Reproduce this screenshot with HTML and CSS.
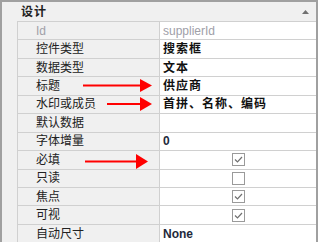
FILE: index.html
```html
<!DOCTYPE html>
<html>
<head>
  <meta charset="UTF-8">
  <title>属性</title>
  <link rel="stylesheet" href="styles.css">
</head>
<body>
  <div class="panel">
    <div class="section">
      <span class="section-title">设计</span>
      <svg class="collapse" width="7" height="4" viewBox="0 0 7 4"><polygon points="0,4 3.5,0 7,4" fill="#707070"/></svg>
    </div>
    <div class="grid">
      <div class="row"><div class="key disabled">Id</div><div class="val disabled">supplierId</div></div>
      <div class="row"><div class="key">控件类型</div><div class="val">搜索框</div></div>
      <div class="row"><div class="key">数据类型</div><div class="val">文本</div></div>
      <div class="row"><div class="key">标题</div><div class="val">供应商</div></div>
      <div class="row"><div class="key">水印或成员</div><div class="val">首拼、名称、编码</div></div>
      <div class="row"><div class="key">默认数据</div><div class="val"></div></div>
      <div class="row"><div class="key">字体增量</div><div class="val latin">0</div></div>
      <div class="row"><div class="key">必填</div><div class="val check"><span class="box on"></span></div></div>
      <div class="row"><div class="key">只读</div><div class="val check"><span class="box"></span></div></div>
      <div class="row"><div class="key">焦点</div><div class="val check"><span class="box on"></span></div></div>
      <div class="row"><div class="key">可视</div><div class="val check"><span class="box on"></span></div></div>
      <div class="row"><div class="key">自动尺寸</div><div class="val latin">None</div></div>
    </div>
    <!-- annotation arrows -->
    <svg class="notes" width="318" height="242" viewBox="0 0 318 242">
      <g fill="#f00" stroke="#f00">
        <line x1="83" y1="85.5" x2="141" y2="85.5" stroke-width="2"/>
        <polygon points="140,79 152,85.5 140,92" stroke="none"/>
        <line x1="107" y1="104" x2="141" y2="104" stroke-width="2"/>
        <polygon points="140,97 152,104 140,111" stroke="none"/>
        <line x1="85" y1="161.5" x2="137" y2="161.5" stroke-width="2"/>
        <polygon points="136,154 148,161.5 136,169" stroke="none"/>
      </g>
    </svg>
  </div>
</body>
</html>
```
FILE: styles.css
```css
body {
  margin: 0;
  font-family: "Liberation Sans", "Noto Sans CJK SC", sans-serif;
  font-size: 12px;
  line-height: 16px;
}
.panel {
  position: relative;
  width: 318px;
  height: 242px;
  box-sizing: border-box;
  border: 2px solid #a0a0a0;
  border-bottom: none;
  background: #f0f0f0;
  overflow: hidden;
}
.section {
  height: 19px;
  display: flex;
  align-items: center;
  justify-content: space-between;
  padding: 0 7px 0 19px;
}
.section-title {
  font-weight: bold;
  letter-spacing: 1px;
  color: #222;
}
.grid {
  margin-left: 15px;
  border-top: 1px solid #d0d0d0;
  border-left: 1px solid #d0d0d0;
}
.row {
  display: grid;
  grid-template-columns: 142px 1fr;
  height: 18.45px;
  box-sizing: border-box;
  border-bottom: 1px solid #d0d0d0;
}
.key {
  display: flex;
  align-items: center;
  padding-left: 18px;
  border-right: 1px solid #d0d0d0;
  color: #222;
}
.val {
  display: flex;
  align-items: center;
  padding-left: 3px;
  background: #fff;
  font-weight: bold;
  letter-spacing: 1px;
  color: #111;
}
.key.disabled, .val.disabled {
  color: #a0a0a8;
  font-weight: normal;
  letter-spacing: 0;
}
.val.latin {
  letter-spacing: 0;
  color: #1e2a3c;
}
.val.check {
  justify-content: center;
  padding-left: 0;
}
.box {
  width: 13px;
  height: 13px;
  box-sizing: border-box;
  border: 1px solid #9a9a9a;
  background: #fff;
}
.box.on {
  background: #fff url("data:image/svg+xml,%3Csvg xmlns='http://www.w3.org/2000/svg' width='11' height='11'%3E%3Cpath d='M2 5.5 L4.5 8 L9 3' fill='none' stroke='%23707070' stroke-width='1.2'/%3E%3C/svg%3E") no-repeat center;
}
.notes {
  position: absolute;
  left: -2px;
  top: -2px;
}
```
